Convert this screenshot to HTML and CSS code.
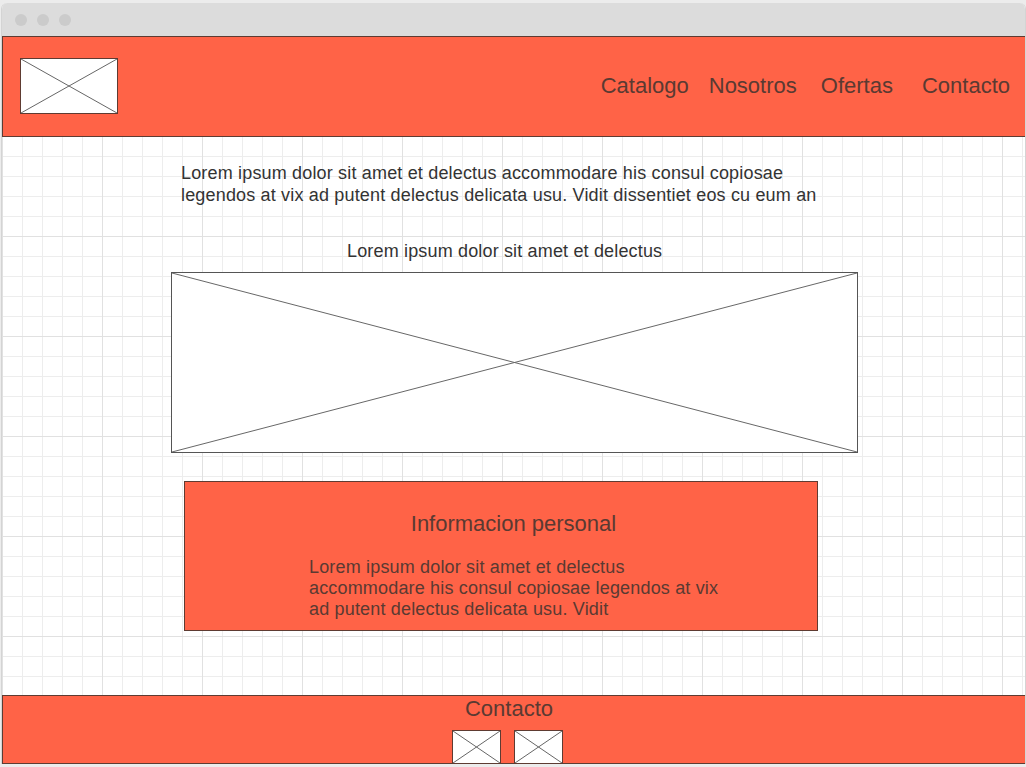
FILE: index.html
```html
<!DOCTYPE html>
<html lang="es">
<head>
<meta charset="utf-8">
<title>Wireframe</title>
<link rel="stylesheet" href="styles.css">
</head>
<body>
<div class="window">
  <div class="titlebar">
    <span class="dot"></span><span class="dot"></span><span class="dot"></span>
  </div>
  <header class="header">
    <div class="ph logo">
      <svg viewBox="0 0 100 100" preserveAspectRatio="none"><line x1="0" y1="0" x2="100" y2="100"/><line x1="100" y1="0" x2="0" y2="100"/></svg>
    </div>
    <nav class="nav">
      <a class="nav-item n1">Catalogo</a>
      <a class="nav-item n2">Nosotros</a>
      <a class="nav-item n3">Ofertas</a>
      <a class="nav-item n4">Contacto</a>
    </nav>
  </header>
  <main class="main">
    <p class="intro">Lorem ipsum dolor sit amet et delectus accommodare his consul copiosae legendos at vix ad putent delectus delicata usu. Vidit dissentiet eos cu eum an</p>
    <p class="caption">Lorem ipsum dolor sit amet et delectus</p>
    <div class="ph banner">
      <svg viewBox="0 0 100 100" preserveAspectRatio="none"><line x1="0" y1="0" x2="100" y2="100"/><line x1="100" y1="0" x2="0" y2="100"/></svg>
    </div>
    <section class="info">
      <div class="info-col">
        <h2 class="info-title">Informacion personal</h2>
        <p class="info-text">Lorem ipsum dolor sit amet et delectus accommodare his consul copiosae legendos at vix ad putent delectus delicata usu. Vidit</p>
      </div>
    </section>
  </main>
  <footer class="footer">
    <div class="footer-col">
      <div class="footer-title">Contacto</div>
      <div class="footer-icons">
        <div class="ph small">
          <svg viewBox="0 0 100 100" preserveAspectRatio="none"><line x1="0" y1="0" x2="100" y2="100"/><line x1="100" y1="0" x2="0" y2="100"/></svg>
        </div>
        <div class="ph small">
          <svg viewBox="0 0 100 100" preserveAspectRatio="none"><line x1="0" y1="0" x2="100" y2="100"/><line x1="100" y1="0" x2="0" y2="100"/></svg>
        </div>
      </div>
    </div>
  </footer>
</div>
</body>
</html>
```

FILE: styles.css
```css
* { box-sizing: border-box; }
html, body { margin: 0; padding: 0; }
body {
  background: #ececec;
  font-family: "Liberation Sans", Arial, sans-serif;
  color: #333;
  width: 1026px;
  height: 767px;
  overflow: hidden;
}
.window {
  margin: 3px 0 0 1px;
  width: 1025px;
  border-left: 1px solid #d4d4d4;
  border-right: 1px solid #d4d4d4;
  border-radius: 6px 6px 0 0;
  background: #fff;
  overflow: hidden;
}
.titlebar {
  height: 33px;
  background: #dcdcdc;
  display: flex;
  align-items: center;
  padding-left: 13px;
  gap: 10px;
}
.dot {
  width: 12px;
  height: 12px;
  border-radius: 50%;
  background: #cbcbcb;
}
.header {
  height: 101px;
  background: #ff6347;
  border: 1px solid #5e3b32;
  margin-right: -1px;
  display: flex;
  align-items: center;
  padding: 0 15px 2px 17px;
}
.ph {
  background: #fff;
  border: 1px solid #555;
  position: relative;
}
.ph svg {
  display: block;
  width: 100%;
  height: 100%;
}
.ph line {
  stroke: #666;
  stroke-width: 1;
  vector-effect: non-scaling-stroke;
}
.logo {
  width: 98px;
  height: 56px;
  border-color: #5e3b32;
}
.nav {
  margin-left: auto;
  display: flex;
}
.nav-item {
  font-size: 22px;
  line-height: 26px;
  color: #5a3a32;
}
.n2 { margin-left: 20px; }
.n3 { margin-left: 24px; }
.n4 { margin-left: 29px; }
.main {
  height: 558px;
  background-color: #fff;
  background-image:
    linear-gradient(to right, #e1e1e1 1px, transparent 1px),
    linear-gradient(to bottom, #e1e1e1 1px, transparent 1px),
    linear-gradient(to right, #ededed 1px, transparent 1px),
    linear-gradient(to bottom, #ededed 1px, transparent 1px);
  background-size: 100px 100px, 100px 100px, 20px 20px, 20px 20px;
  background-position: 0 -1px, 0 -1px, 0 -1px, 0 -1px;
  padding-top: 25px;
  display: flex;
  flex-direction: column;
}
.intro {
  margin: 0 0 0 179px;
  width: 660px;
  font-size: 18px;
  line-height: 22px;
  letter-spacing: 0.17px;
  color: #333;
}
.caption {
  margin: 34px 0 0 345px;
  font-size: 18px;
  line-height: 22px;
  letter-spacing: 0.16px;
  color: #333;
}
.banner {
  margin: 10px 0 0 169px;
  width: 687px;
  height: 181px;
}
.info {
  margin: 28px 0 0 182px;
  width: 634px;
  height: 150px;
  background: #ff6347;
  border: 1px solid #5e3b32;
  padding: 29px 0 0 124px;
}
.info-col {
  width: 420px;
}
.info-title {
  margin: 0 11px 0 0;
  font-size: 22px;
  line-height: 26px;
  font-weight: normal;
  text-align: center;
  color: #5a3a32;
}
.info-text {
  margin: 20px 0 0 0;
  font-size: 18px;
  line-height: 21px;
  letter-spacing: 0.17px;
  color: #5a3a32;
}
.footer {
  height: 69px;
  background: #ff6347;
  border: 1px solid #5e3b32;
  margin-right: -1px;
  overflow: hidden;
  display: flex;
}
.footer-col {
  margin-left: 449px;
  width: 111px;
  display: flex;
  flex-direction: column;
  align-items: center;
}
.footer-title {
  font-size: 22px;
  line-height: 26px;
  color: #5a3a32;
  margin-left: 3px;
}
.footer-icons {
  margin-top: 8px;
  display: flex;
  gap: 13px;
}
.small {
  width: 49px;
  height: 34px;
  border-color: #5e3b32;
}
```
